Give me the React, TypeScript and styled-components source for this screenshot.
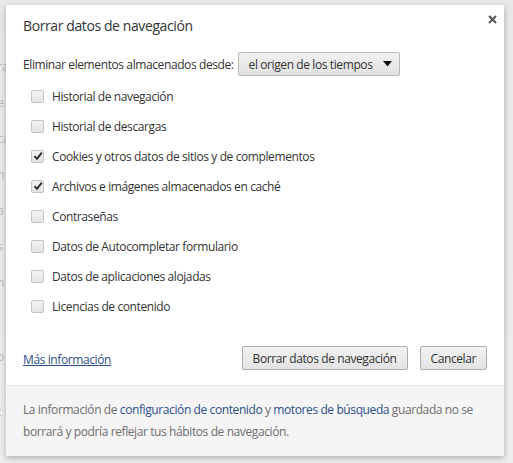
import React from "react";
import styled, { createGlobalStyle } from "styled-components";

const Global = createGlobalStyle`
  html, body { margin: 0; padding: 0; }
  body {
    width: 513px;
    height: 463px;
    overflow: hidden;
    background: #ebebeb;
    font-family: "Open Sans", "Noto Sans", sans-serif;
  }
`;

const Page = styled.div`
  position: relative;
  width: 513px;
  height: 463px;
  background: linear-gradient(#e9e9e9, #eeeeee);
`;

const Backdrop = styled.div`
  display: flex;
  flex-direction: column;
  gap: 19px;
  padding: 58px 0 0 0;
  font-size: 12px;
  color: #bdbdbd;
`;

const BackLine = styled.div`
  margin-left: -3px;
  white-space: nowrap;
`;

const Dialog = styled.div`
  position: absolute;
  top: 5px;
  left: 6px;
  width: 498px;
  height: 451px;
  background: #fff;
  box-shadow: 0 2px 6px rgba(0, 0, 0, 0.28);
  display: flex;
  flex-direction: column;
  color: #333;
  font-size: 12px;
  letter-spacing: -0.4px;
`;

const Header = styled.div`
  display: flex;
  justify-content: space-between;
  align-items: flex-start;
  padding: 8px 6px 0 17px;
`;

const Title = styled.h1`
  margin: 3px 0 0 0;
  font-size: 14px;
  font-weight: 400;
  letter-spacing: -0.4px;
  line-height: 20px;
  color: #333;
`;

const Close = styled.button`
  width: 12px;
  height: 12px;
  padding: 0;
  border: none;
  background: none;
  display: flex;
  align-items: center;
  justify-content: center;
`;

const Body = styled.div`
  padding: 16px 17px 0 17px;
  display: flex;
  flex-direction: column;
`;

const RangeRow = styled.div`
  display: flex;
  align-items: center;
  gap: 4px;
  height: 24px;
`;

const Select = styled.div`
  display: flex;
  align-items: center;
  justify-content: space-between;
  box-sizing: border-box;
  width: 162px;
  height: 24px;
  padding: 0 7px 0 10px;
  border: 1px solid #b9b9b9;
  border-radius: 2px;
  background: linear-gradient(#f1f1f1, #e2e2e2);
  color: #333;
`;

const List = styled.div`
  margin-top: 5px;
  display: flex;
  flex-direction: column;
`;

const Row = styled.label`
  display: flex;
  align-items: center;
  height: 30px;
  padding-left: 8px;
  gap: 8px;
  color: #333;
`;

const Box = styled.span`
  box-sizing: border-box;
  width: 13px;
  height: 13px;
  border: 1px solid #c4c4c4;
  border-radius: 2px;
  background: linear-gradient(#f4f4f4, #e4e4e4);
  display: flex;
  align-items: center;
  justify-content: center;
`;

const Actions = styled.div`
  display: flex;
  align-items: center;
  padding: 25px 17px 0 17px;
  gap: 12px;
`;

const Link = styled.a`
  color: #2c4e8c;
  text-decoration: underline;
  margin-right: auto;
  margin-top: 2px;
`;

const Button = styled.button<{ $pad: number }>`
  box-sizing: border-box;
  height: 24px;
  padding: 0 ${(p) => p.$pad}px;
  border: 1px solid #adadad;
  border-radius: 2px;
  background: linear-gradient(#f2f2f2, #e3e3e3);
  font-family: inherit;
  font-size: 12px;
  letter-spacing: -0.4px;
  color: #333;
`;

const Info = styled.div`
  margin-top: auto;
  height: 71px;
  box-sizing: border-box;
  border-top: 1px solid #e5e5e5;
  background: #f5f5f5;
  padding: 13px 17px 0 17px;
  line-height: 22px;
  color: #6e6e6e;
`;

const InfoLink = styled.a`
  color: #2c4e8c;
  text-decoration: none;
`;

const Check = () => (
  <svg width="10" height="10" viewBox="0 0 10 10">
    <path d="M1.5 5.2 L4 7.8 L8.8 1.6" fill="none" stroke="#2b2b2b" strokeWidth="1.9" />
  </svg>
);

const items: [string, boolean][] = [
  ["Historial de navegación", false],
  ["Historial de descargas", false],
  ["Cookies y otros datos de sitios y de complementos", true],
  ["Archivos e imágenes almacenados en caché", true],
  ["Contraseñas", false],
  ["Datos de Autocompletar formulario", false],
  ["Datos de aplicaciones alojadas", false],
  ["Licencias de contenido", false],
];

export default function App() {
  return (
    <Page>
      <Global />
      <Backdrop>
        {["ra", "e", "ca", "n", "a", "s", "n", "", "", "o", "", "t"].map((t, i) => (
          <BackLine key={i}>{t}</BackLine>
        ))}
      </Backdrop>
      <Dialog>
        <Header>
          <Title>Borrar datos de navegación</Title>
          <Close aria-label="Cerrar">
            <svg width="9" height="9" viewBox="0 0 9 9">
              <path d="M1 1 L8 8 M8 1 L1 8" stroke="#555" strokeWidth="2" />
            </svg>
          </Close>
        </Header>
        <Body>
          <RangeRow>
            <span>Eliminar elementos almacenados desde:</span>
            <Select>
              <span>el origen de los tiempos</span>
              <svg width="9" height="6" viewBox="0 0 9 6">
                <path d="M0 0 H9 L4.5 5.5 Z" fill="#111" />
              </svg>
            </Select>
          </RangeRow>
          <List>
            {items.map(([label, checked]) => (
              <Row key={label}>
                <Box>{checked && <Check />}</Box>
                <span>{label}</span>
              </Row>
            ))}
          </List>
        </Body>
        <Actions>
          <Link href="#">Más información</Link>
          <Button $pad={10}>Borrar datos de navegación</Button>
          <Button $pad={10}>Cancelar</Button>
        </Actions>
        <Info>
          La información de <InfoLink href="#">configuración de contenido</InfoLink> y{" "}
          <InfoLink href="#">motores de búsqueda</InfoLink> guardada no se borrará y podría
          reflejar tus hábitos de navegación.
        </Info>
      </Dialog>
    </Page>
  );
}
